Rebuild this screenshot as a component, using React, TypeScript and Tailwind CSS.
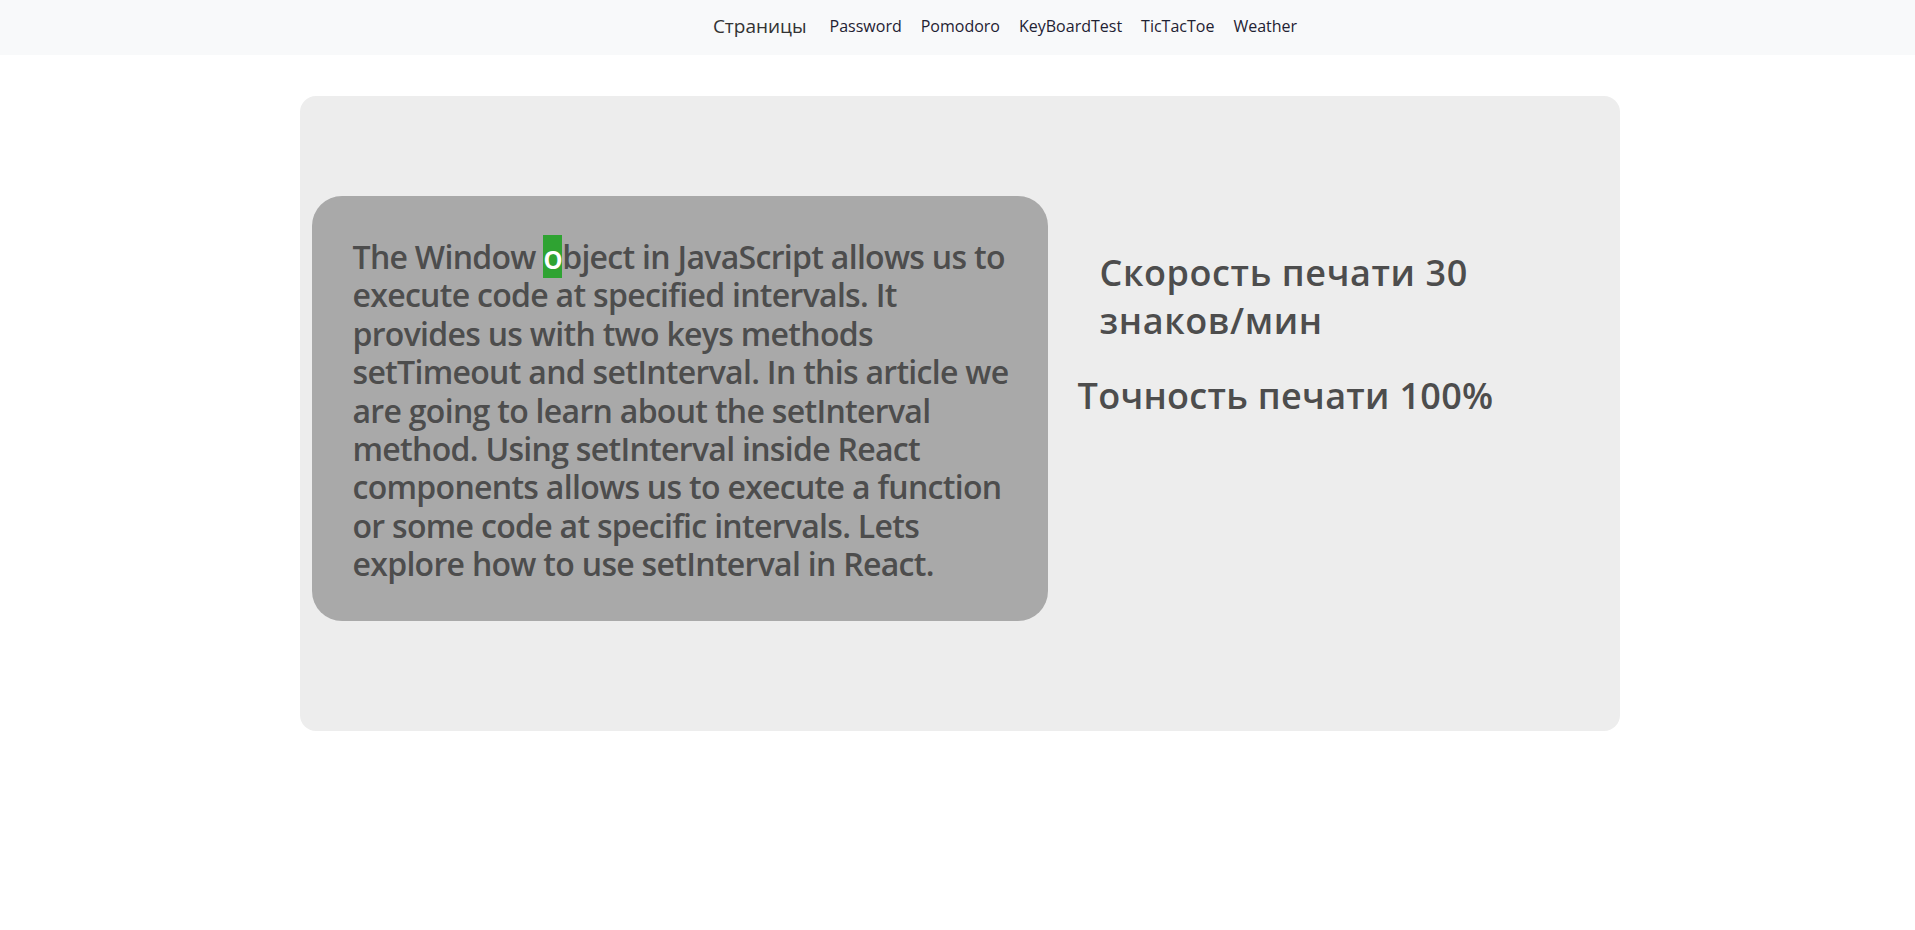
// Тренажёр печати: верхняя навигация + карточка с текстом и статистикой

const LINKS = ['Password', 'Pomodoro', 'KeyBoardTest', 'TicTacToe', 'Weather'];

// строки текста разбиты так же, как в макете
const LINES = [
    'execute code at specified intervals. It',
    'provides us with two keys methods',
    'setTimeout and setInterval. In this article we',
    'are going to learn about the setInterval',
    'method. Using setInterval inside React',
    'components allows us to execute a function',
    'or some code at specific intervals. Lets',
    'explore how to use setInterval in React.',
];

function Navbar() {
    return (
        <nav className="flex h-[55px] items-center justify-center bg-[#f8f9fa] pb-[3px] pl-[95px]">
            <span className="text-[19px] leading-[30px] text-[#333]">Страницы</span>
            <div className="ml-[23px] flex gap-[19px]">
                {LINKS.map((link) => (
                    <a key={link} href="#" className="text-[16px] leading-6 text-[#1f2233]">
                        {link}
                    </a>
                ))}
            </div>
        </nav>
    );
}

export default function App() {
    return (
        <div className="min-h-[930px] bg-white font-['Open_Sans','Noto_Sans',sans-serif]">
            <Navbar />

            <main className="relative left-[2px] mx-auto mt-[41px] flex w-[1320px] items-start rounded-2xl bg-[#ededed] px-3 pb-[110px] pt-[100px]">
                {/* текст, который нужно напечатать */}
                <div className="w-[736px] shrink-0 rounded-[30px] bg-[#a9a9a9] pb-[37px] pl-[41px] pr-[20px] pt-[42px]">
                    <div className="whitespace-nowrap text-[32px] font-semibold leading-[38.4px] tracking-[-0.7px] text-[#4d4d4d]">
                        <div>
                            The Window <span className="bg-[#2fa332] text-white">o</span>bject in JavaScript allows us to
                        </div>
                        {LINES.map((line) => (
                            <div key={line}>{line}</div>
                        ))}
                    </div>
                </div>

                {/* статистика */}
                <div className="flex flex-col pl-[30px] pt-[53px] text-[36px] font-semibold leading-[48px] tracking-[0.6px] text-[#4d4d4d]">
                    <h2 className="pl-[22px]">
                        <div>Скорость печати 30</div>
                        <div>знаков/мин</div>
                    </h2>
                    <h2 className="mt-[27px] tracking-[0.3px]">Точность печати 100%</h2>
                </div>
            </main>
        </div>
    );
}
